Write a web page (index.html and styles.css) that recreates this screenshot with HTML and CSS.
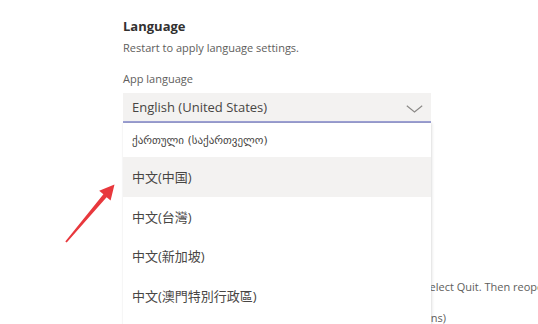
FILE: index.html
```html
<!DOCTYPE html>
<html lang="en">
<head>
<meta charset="utf-8">
<link rel="stylesheet" href="styles.css">
</head>
<body>
<main class="settings">
  <h2 class="title">Language</h2>
  <p class="desc">Restart to apply language settings.</p>
  <div class="label">App language</div>
  <div class="select">
    <span class="select-value">English (United States)</span>
    <svg class="chevron" width="17" height="8" viewBox="0 0 17 8"><path d="M0.8 0.8 L8.5 7 L16.2 0.8" fill="none" stroke="#8a8886" stroke-width="1.1"/></svg>
  </div>
  <div class="under">
    <p class="under-line under-first"><span>To restart the app, right-click its icon in the taskbar and then select Quit. Then reopen</span></p>
    <p class="under-line under-second"><span>Keyboard language overrides keyboard shortcuts (see the Options)</span></p>
  </div>
  <ul class="menu">
    <li class="item item-ka">ქართული (საქართველო)</li>
    <li class="item item-hover item-sc">中文(中国)</li>
    <li class="item">中文(台灣)</li>
    <li class="item">中文(新加坡)</li>
    <li class="item">中文(澳門特別行政區)</li>
    <li class="item">中文(香港特別行政區)</li>
  </ul>
</main>
<svg class="arrow" width="538" height="324" viewBox="0 0 538 324">
  <polygon points="114.5,184.5 110.6,200.6 106.6,197.2 66.7,242.6 65.3,241.4 103.4,194.3 99.2,190.8" fill="#e8383d"/>
</svg>
</body>
</html>
```
FILE: styles.css
```css
html, body {
  margin: 0;
  padding: 0;
  background: #ffffff;
  width: 538px;
  height: 324px;
  overflow: hidden;
}
body {
  font-family: "Open Sans", "DejaVu Sans", "Noto Sans CJK SC", sans-serif;
  color: #605e5c;
  position: relative;
}
.settings {
  position: relative;
  padding: 17px 0 0 123px;
  width: 308px;
}
.title {
  margin: 0;
  font-size: 13px;
  line-height: 18px;
  font-weight: 700;
  color: #323130;
}
.desc {
  margin: 5px 0 0;
  font-size: 11px;
  line-height: 16px;
  color: #605e5c;
}
.label {
  margin-top: 15px;
  font-size: 11px;
  line-height: 16px;
  color: #605e5c;
}
.select {
  margin-top: 6px;
  height: 28px;
  background: #f3f2f1;
  border-bottom: 2px solid #9ea2d6;
  display: flex;
  align-items: center;
  justify-content: space-between;
  padding: 0 8px 0 9px;
}
.select-value {
  font-size: 13px;
  color: #484644;
}
.chevron {
  display: block;
  margin-top: 4px;
}
.under {
  margin-top: 156px;
  width: 415px;
  overflow: hidden;
}
.under-line {
  margin: 0 0 15px;
  font-size: 11px;
  line-height: 16px;
  white-space: nowrap;
  color: #605e5c;
  display: flex;
  justify-content: flex-end;
}
.under-first {
  width: 427px;
}
.under-second {
  width: 323px;
}
.menu {
  position: absolute;
  left: 123px;
  top: 123px;
  width: 308px;
  height: 220px;
  margin: 0;
  padding: 0;
  list-style: none;
  background: #ffffff;
  box-shadow: 1px 0 3px rgba(0,0,0,0.12), 0 0 1px rgba(0,0,0,0.1);
  overflow: hidden;
}
.item {
  height: 39.5px;
  display: flex;
  align-items: center;
  padding-left: 9px;
  font-size: 13px;
  color: #484644;
  font-family: "Open Sans", "Noto Sans CJK TC", sans-serif;
}
.item-ka {
  height: 34px;
  font-family: "DejaVu Sans", sans-serif;
  font-size: 11px;
}
.item-hover {
  background: #f3f2f1;
}
.item-sc {
  font-family: "Open Sans", "Noto Sans CJK SC", sans-serif;
}
.arrow {
  position: absolute;
  left: 0;
  top: 0;
  pointer-events: none;
}
```
